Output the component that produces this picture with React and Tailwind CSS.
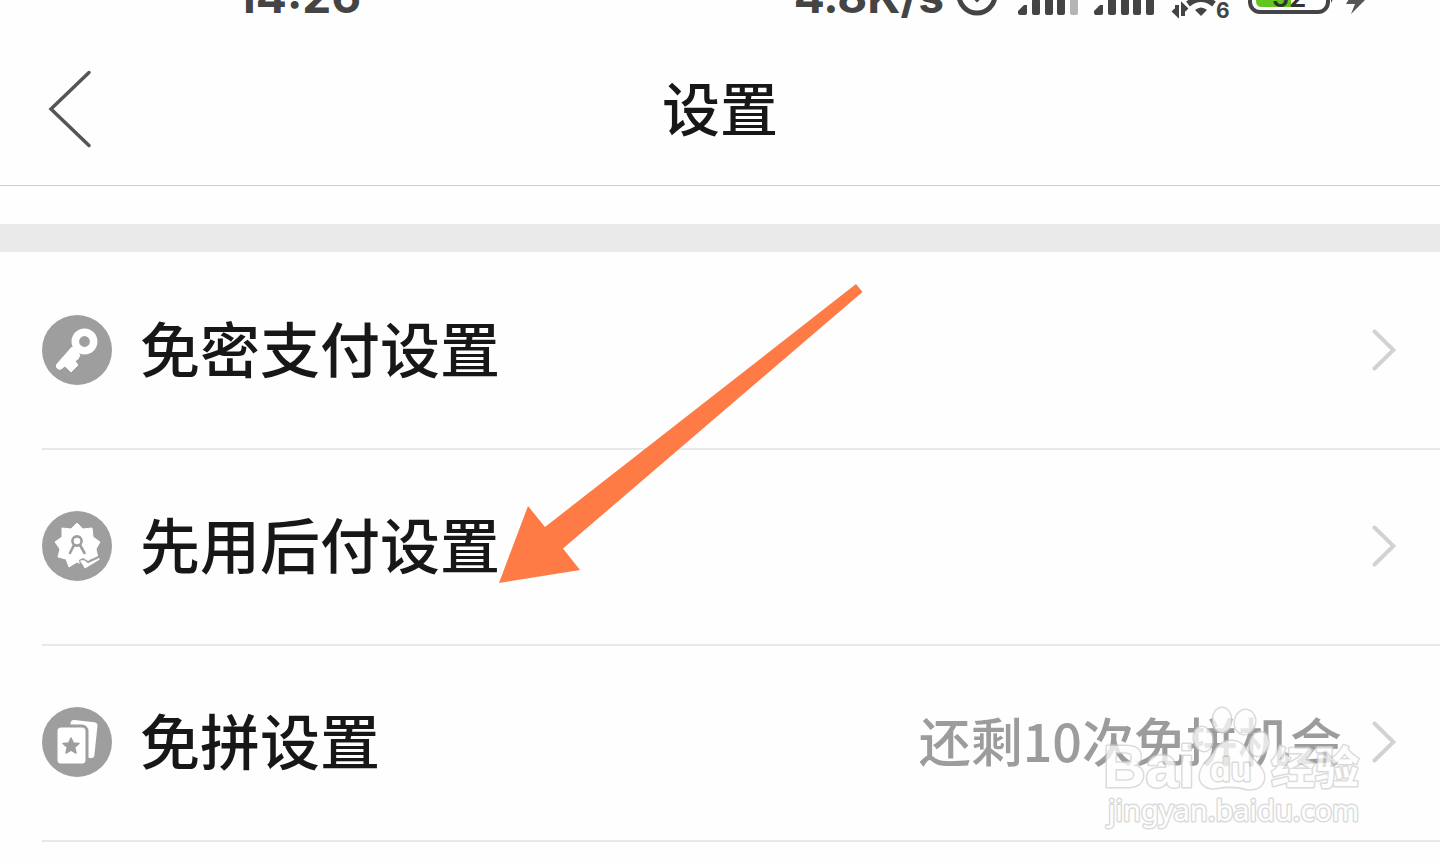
const rows = [
    { id: 'no-password', label: '免密支付设置', note: '', Icon: KeyIcon },
    { id: 'pay-later', label: '先用后付设置', note: '', Icon: BadgeIcon },
    { id: 'no-group', label: '免拼设置', note: '还剩10次免拼机会', Icon: CardsIcon },
];

function KeyIcon() {
    return (
        <svg viewBox="0 0 70 70" className="size-[70px] shrink-0" aria-hidden="true">
            <circle cx="35" cy="35" r="35" fill="#9e9e9e" />
            <circle cx="42.500" cy="26.500" r="9.200" fill="none" stroke="#fff" strokeWidth="7.600" />
            <path d="M30 32 L15 49 Q13.500 51 15 53 Q17 55 19 54 L23 51 L29 57 L36 50 L33 46 L36 44 L38 40 Z" fill="#fff" stroke="#fff" strokeLinejoin="round" />
        </svg>
    );
}

function BadgeIcon() {
    return (
        <svg viewBox="0 0 70 70" className="size-[70px] shrink-0" aria-hidden="true">
            <circle cx="35" cy="35" r="35" fill="#9e9e9e" />
            <path
                d="M35 12 L41 18 L50 17 L51 26 L58 31 L54 38 L56 47 L48 48 L43 55 L35 51 L27 56 L24 48 L16 46 L18 38 L13 31 L20 26 L20 17 L29 18 Z"
                fill="#fff"
                stroke="#fff"
                strokeLinejoin="round"
            />
            <path d="M37 49 L41 47 L46 50 L60 43 L58 50 L45 60 L38 54 Z" fill="#9e9e9e" />
            <path d="M39 50 L42 50 L46 53 L57 48 L43 56.500 L41 53 Z" fill="#fff" stroke="#fff" strokeWidth="1.500" strokeLinejoin="round" />
            <g fill="none" stroke="#9e9e9e" strokeWidth="2.600" strokeLinecap="round">
                <circle cx="35" cy="30" r="4.600" />
                <path d="M32 34 L28 42 M38 34 L42.500 42" />
            </g>
        </svg>
    );
}

function CardsIcon() {
    return (
        <svg viewBox="0 0 70 70" className="size-[70px] shrink-0" aria-hidden="true">
            <circle cx="35" cy="35" r="35" fill="#9e9e9e" />
            <rect x="27" y="14" width="27" height="36" rx="3.500" fill="#fff" transform="rotate(6 40 32)" />
            <rect x="14" y="19" width="31" height="39" rx="5" fill="#fff" stroke="#9e9e9e" strokeWidth="3" />
            <path d="M29 31 L31.300 36 L37 36.500 L32.700 40.300 L34 46 L29 43 L24 46 L25.300 40.300 L21 36.500 L26.700 36 Z" fill="#9e9e9e" stroke="#9e9e9e" strokeWidth="1.500" strokeLinejoin="round" />
        </svg>
    );
}

function Signal({ weak }) {
    return (
        <svg viewBox="0 0 60 36" className="h-9 w-[60px]" fill="#444" aria-hidden="true">
            <path d="M2 36 Q0 36 0 34 V32 L6 26 H9 V34 Q9 36 7 36 Z" />
            <rect x="14" y="20" width="8" height="16" rx="2" />
            <rect x="27" y="14" width="8" height="22" rx="2" />
            <rect x="39" y="7" width="8" height="29" rx="2" />
            <rect x="52" y="0" width="8" height="36" rx="2" fill={weak ? '#b4b4b4' : '#444'} />
        </svg>
    );
}

function StatusBar() {
    return (
        <div className="flex h-8 items-end justify-between overflow-hidden pl-[236px] pr-[72px] font-['Inter','Liberation_Sans',sans-serif] text-[46px] font-bold leading-[52px] text-[#444]">
            <time className="mb-2.5">14:26</time>
            <div className="flex items-end pb-4">
                <span className="-mb-1.5 mr-3">4.8K/s</span>
                <svg viewBox="0 0 42 42" className="mr-5 size-[42px]" fill="none" stroke="#444" strokeWidth="5" aria-hidden="true">
                    <circle cx="21" cy="21" r="18" />
                    <path d="M13 18 L21 25 L30 16" />
                </svg>
                <div className="mb-px mr-4">
                    <Signal weak />
                </div>
                <div className="mb-px mr-4">
                    <Signal />
                </div>
                <svg viewBox="0 0 60 42" className="-mb-1 mr-[18px] h-[42px] w-[60px]" fill="none" stroke="#444" aria-hidden="true">
                    <path d="M7 27 V36 L3 32 M13 38 V28 L17 32" strokeWidth="4" />
                    <path d="M18 26 Q31 16 44 26" strokeWidth="6" />
                    <path d="M25 32 Q31 27 37 32 L31 38 Z" fill="#444" stroke="none" />
                    <text x="46" y="40" fontSize="21" fontWeight="700" fill="#444" stroke="none">6</text>
                </svg>
                <svg viewBox="0 0 120 42" className="h-[42px] w-[120px]" aria-hidden="true">
                    <rect x="2" y="0" width="78" height="38" rx="10" fill="#fff" stroke="#444" strokeWidth="4" />
                    <path d="M14 6 H43 V33 H14 Q8 33 8 27 V12 Q8 6 14 6 Z" fill="#62c61e" />
                    <text x="41" y="33" textAnchor="middle" fontSize="28" fontWeight="600" fill="#333">52</text>
                    <path d="M83 14 Q88 20 83 29 Z" fill="#444" />
                    <path d="M111 8 L98 30 H107 L103 40 L119 24 H111 Z" fill="#555" />
                </svg>
            </div>
        </div>
    );
}

function Row({ id, label, note, Icon }) {
    return (
        <li className="ml-[42px] border-b-2 border-[#e9e9e9]">
            <a href={`#${id}`} className="flex h-[194px] items-center pb-0.5 pr-11">
                <Icon />
                <span className="ml-7 grow pb-1.5 text-[60px] font-medium leading-[80px] text-[#171717]">{label}</span>
                {note && <span className="mr-[30px] pb-1 text-[52px] font-medium leading-[72px] text-[#9c9c9c]">{note}</span>}
                <svg viewBox="0 0 24 42" className="h-[42px] w-6 shrink-0" fill="none" stroke="#d2d2d2" strokeWidth="4" strokeLinecap="round" aria-hidden="true">
                    <path d="M2.500 2.500 L21.500 21 L2.500 39.500" />
                </svg>
            </a>
        </li>
    );
}

function Arrow() {
    return (
        <svg viewBox="0 0 364 299" className="pointer-events-none absolute left-[499px] top-[284px] h-[299px] w-[364px]" aria-hidden="true">
            <path d="M357 0 L363.500 8 L64 264.500 L81 286 L0 299 L29 222 L46 243 Z" fill="#ff7b46" />
        </svg>
    );
}

function Watermark() {
    return (
        <svg
            viewBox="0 0 264 130"
            className="pointer-events-none absolute right-[74px] top-[704px] h-[130px] w-[264px] font-['Noto_Sans','Noto_Sans_CJK_SC',sans-serif] opacity-75"
            fill="#fff"
            stroke="#d0d0d0"
            strokeWidth="3"
            strokeLinejoin="round"
            paintOrder="stroke"
            aria-hidden="true"
        >
            <text x="1" y="83" fontSize="59" fontWeight="700" fontFamily="Liberation Sans">Bai</text>
            <ellipse cx="120" cy="16" rx="9" ry="12" />
            <ellipse cx="143" cy="18" rx="10" ry="12" transform="rotate(12 143 18)" />
            <ellipse cx="101" cy="35" rx="9" ry="12" transform="rotate(-12 101 35)" />
            <ellipse cx="157" cy="40" rx="9" ry="12" transform="rotate(20 157 40)" />
            <path d="M129 37 C139 37 143 43 147 50 C152 58 162 64 162 73 C162 83 153 86 145 85 C134 82 124 82 114 84 C105 85 97 80 98 71 C99 61 107 56 112 49 C116 42 120 37 129 37 Z" />
            <text x="108" y="77" fontSize="34" fontWeight="700" fontFamily="Liberation Sans">du</text>
            <text x="169" y="80" fontSize="44" fontWeight="700">经验</text>
            <text x="6" y="117" fontSize="29">jingyan.baidu.com</text>
        </svg>
    );
}

export default function App() {
    return (
        <main className="relative min-h-screen overflow-hidden bg-[#fefefe] font-['Noto_Sans_CJK_SC',sans-serif]">
            <StatusBar />
            <header className="grid h-[154px] grid-cols-[1fr_auto_1fr] items-center border-b border-[#cfcfcf]">
                <button type="button" aria-label="返回" className="ml-12 w-11">
                    <svg viewBox="0 0 44 80" className="h-20 w-11" fill="none" stroke="#555" strokeWidth="3.500" strokeLinecap="round" aria-hidden="true">
                        <path d="M41 3.500 L3 40 L41 76.500" />
                    </svg>
                </button>
                <h1 className="pb-1.5 text-[58px] font-medium leading-[80px] text-[#171717]">设置</h1>
            </header>
            <div className="mt-[38px] h-7 bg-[#eaeaea]" />
            <ul className="pt-0.5">
                {rows.map((row) => (
                    <Row key={row.id} {...row} />
                ))}
            </ul>
            <Arrow />
            <Watermark />
        </main>
    );
}
